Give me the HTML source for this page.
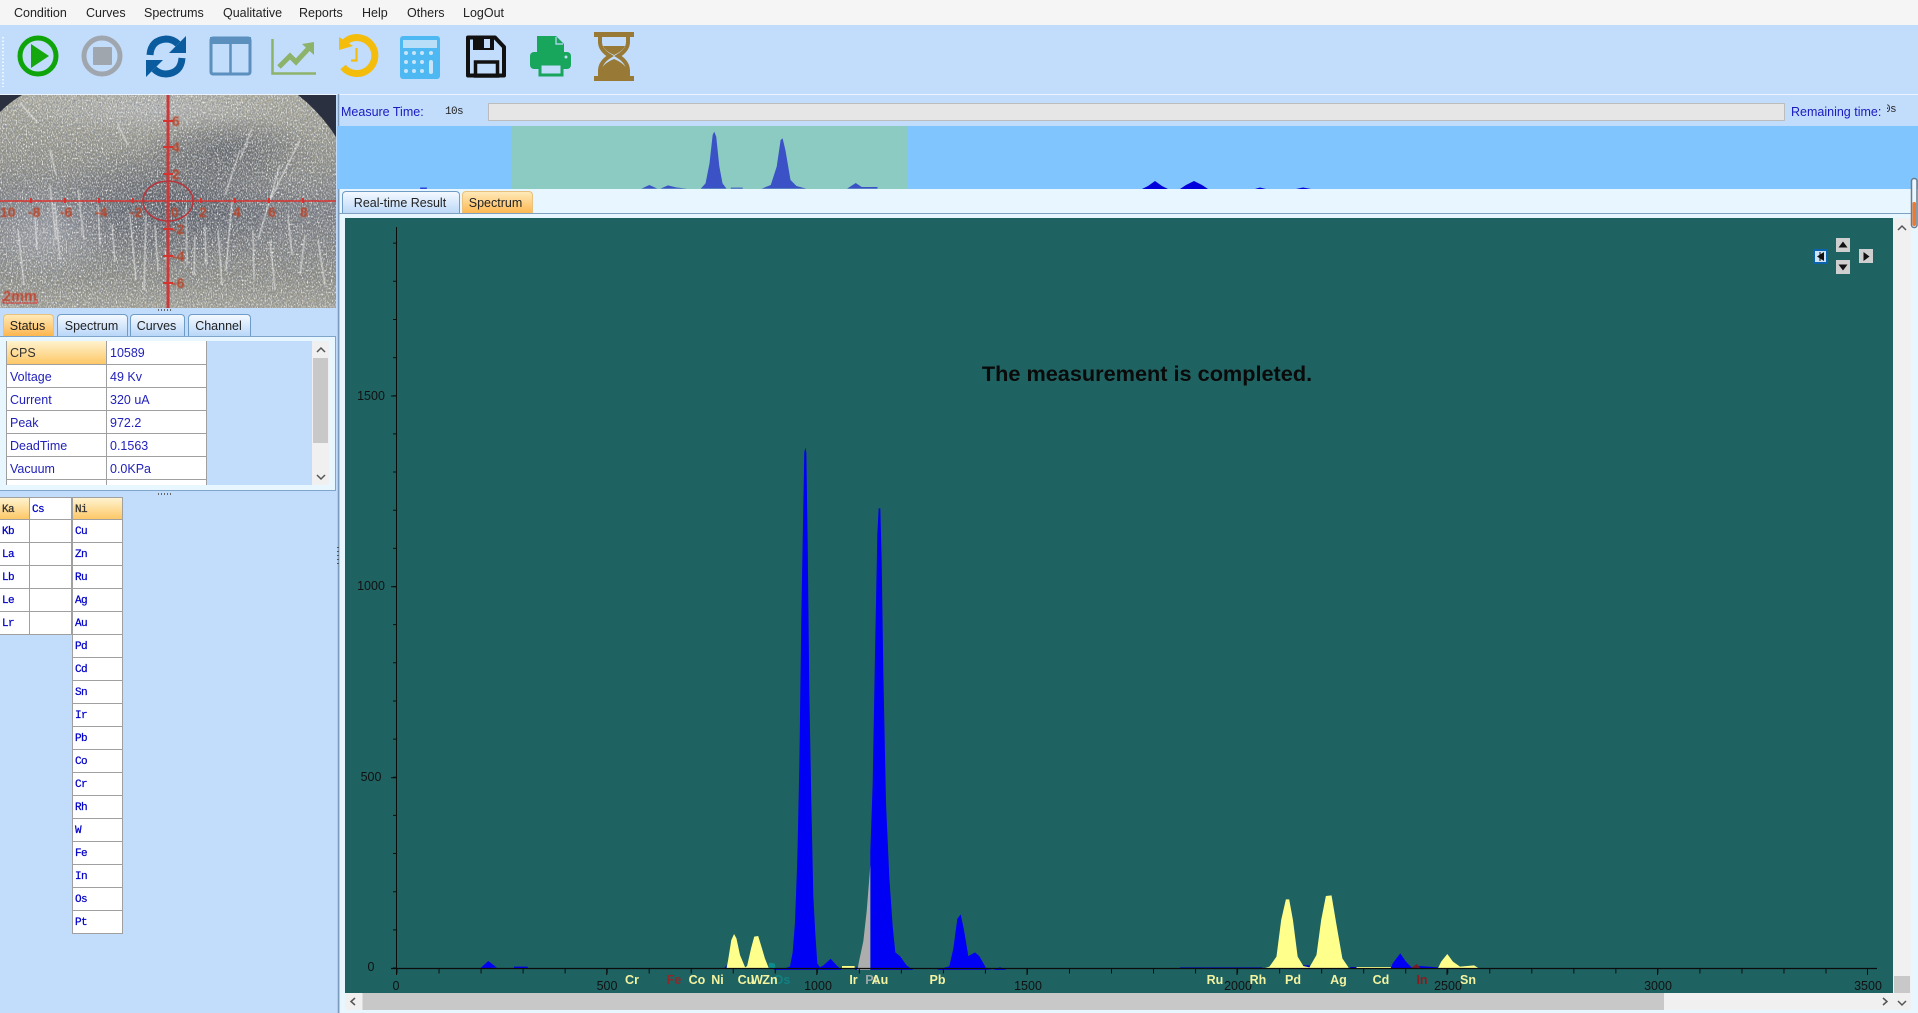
<!DOCTYPE html>
<html><head><meta charset="utf-8"><title>Spectrum</title>
<style>
html,body{margin:0;padding:0;width:1918px;height:1013px;overflow:hidden;background:#c2dcfc;font-family:"Liberation Sans",sans-serif}
.a{position:absolute}
#menu{left:0;top:0;width:1918px;height:25px;background:#f5f5f5}
#menu span{position:absolute;top:5px;font-size:12.5px;line-height:16px;color:#222}
.tab{position:absolute;box-sizing:border-box;border:1px solid #6f9cc6;border-bottom:0;border-radius:4px 4px 0 0;background:linear-gradient(#f4f9ff,#b9d7f8);font-size:12.5px;color:#222;text-align:center;padding-right:2px}
.tab.on{background:linear-gradient(#ffe9b8,#fdb64e);border-color:#e8c27c}
.c{position:absolute;box-sizing:border-box;background:#fff;border-right:1px solid #a0a0a0;border-bottom:1px solid #a0a0a0;color:#2222bb;font-size:12.5px;line-height:24px;padding-left:3px;height:23px;white-space:nowrap}
.c.h{background:linear-gradient(#fff3cf,#fdc868);color:#333}
.m{font-family:"Liberation Mono",monospace;font-size:11px;letter-spacing:-.6px;color:#0000c8;padding-left:2px;font-weight:normal;-webkit-text-stroke:.25px #0000c8}
.m.h{color:#333;-webkit-text-stroke:.25px #333}
.b{border-left:1px solid #a0a0a0}
</style></head><body>
<div id="menu" class="a">
<span style="left:14px">Condition</span><span style="left:86px">Curves</span><span style="left:144px">Spectrums</span><span style="left:223px">Qualitative</span><span style="left:299px">Reports</span><span style="left:362px">Help</span><span style="left:407px">Others</span><span style="left:463px">LogOut</span>
</div>

<div class="a" style="left:0;top:94px;width:1918px;height:1px;background:#eaf3ff"></div>
<div class="a" style="left:340px;top:189px;width:1578px;height:824px;background:#e8f6ff"></div>
<div class="a" style="left:0;top:336px;width:336px;height:155px;background:#e8f6ff;box-sizing:border-box;border-top:1px solid #7fa5ca;border-bottom:1px solid #7fa5ca;border-right:1px solid #7fa5ca"></div>
<div class="a" style="left:6px;top:341px;width:323px;height:144px;background:#c2dcfc;overflow:hidden">
  <div class="c h b" style="left:0;top:0;width:101px;height:24px;line-height:25px">CPS</div><div class="c" style="left:101px;top:0;width:100px;height:24px;line-height:25px">10589</div>
  <div class="c b" style="left:0;top:24px;width:101px">Voltage</div><div class="c" style="left:101px;top:24px;width:100px">49 Kv</div>
  <div class="c b" style="left:0;top:47px;width:101px">Current</div><div class="c" style="left:101px;top:47px;width:100px">320 uA</div>
  <div class="c b" style="left:0;top:70px;width:101px">Peak</div><div class="c" style="left:101px;top:70px;width:100px">972.2</div>
  <div class="c b" style="left:0;top:93px;width:101px">DeadTime</div><div class="c" style="left:101px;top:93px;width:100px">0.1563</div>
  <div class="c b" style="left:0;top:116px;width:101px">Vacuum</div><div class="c" style="left:101px;top:116px;width:100px">0.0KPa</div>
  <div class="c b" style="left:0;top:139px;width:101px"></div><div class="c" style="left:101px;top:139px;width:100px"></div>
  <div class="a" style="left:306px;top:0;width:17px;height:144px;background:#f0f0f0"></div>
  <div class="a" style="left:307px;top:17px;width:15px;height:85px;background:#c8c8c8"></div>
</div>

<div class="tab on" style="left:3px;top:314px;width:51px;height:22px;line-height:22px">Status</div>
<div class="tab" style="left:57px;top:314px;width:71px;height:22px;line-height:22px">Spectrum</div>
<div class="tab" style="left:130px;top:314px;width:55px;height:22px;line-height:22px">Curves</div>
<div class="tab" style="left:188px;top:314px;width:63px;height:22px;line-height:22px">Channel</div>

<div class="tab" style="left:342px;top:191px;width:118px;height:23px;line-height:23px">Real-time Result</div>
<div class="tab on" style="left:462px;top:191px;width:71px;height:23px;line-height:23px;padding-right:4px">Spectrum</div>
<div class="a" style="left:338px;top:213px;width:1573px;height:1px;background:#7fa0c0"></div>

<!-- small tables -->
<div class="c m h" style="left:0;top:497px;width:30px;border-top:1px solid #a0a0a0">Ka</div>
<div class="c m" style="left:30px;top:497px;width:42px;border-top:1px solid #a0a0a0">Cs</div>
<div class="c m" style="left:0;top:520px;width:30px">Kb</div><div class="c" style="left:30px;top:520px;width:42px"></div>
<div class="c m" style="left:0;top:543px;width:30px">La</div><div class="c" style="left:30px;top:543px;width:42px"></div>
<div class="c m" style="left:0;top:566px;width:30px">Lb</div><div class="c" style="left:30px;top:566px;width:42px"></div>
<div class="c m" style="left:0;top:589px;width:30px">Le</div><div class="c" style="left:30px;top:589px;width:42px"></div>
<div class="c m" style="left:0;top:612px;width:30px">Lr</div><div class="c" style="left:30px;top:612px;width:42px"></div>
<div class="a" style="left:72px;top:497px;width:51px;height:437px;border-left:1px solid #a0a0a0;box-sizing:border-box">
<div class="c m h" style="left:0;top:0;width:50px;border-top:1px solid #a0a0a0">Ni</div>
<div class="c m" style="left:0;top:23px;width:50px">Cu</div>
<div class="c m" style="left:0;top:46px;width:50px">Zn</div>
<div class="c m" style="left:0;top:69px;width:50px">Ru</div>
<div class="c m" style="left:0;top:92px;width:50px">Ag</div>
<div class="c m" style="left:0;top:115px;width:50px">Au</div>
<div class="c m" style="left:0;top:138px;width:50px">Pd</div>
<div class="c m" style="left:0;top:161px;width:50px">Cd</div>
<div class="c m" style="left:0;top:184px;width:50px">Sn</div>
<div class="c m" style="left:0;top:207px;width:50px">Ir</div>
<div class="c m" style="left:0;top:230px;width:50px">Pb</div>
<div class="c m" style="left:0;top:253px;width:50px">Co</div>
<div class="c m" style="left:0;top:276px;width:50px">Cr</div>
<div class="c m" style="left:0;top:299px;width:50px">Rh</div>
<div class="c m" style="left:0;top:322px;width:50px">W</div>
<div class="c m" style="left:0;top:345px;width:50px">Fe</div>
<div class="c m" style="left:0;top:368px;width:50px">In</div>
<div class="c m" style="left:0;top:391px;width:50px">Os</div>
<div class="c m" style="left:0;top:414px;width:50px">Pt</div>
</div>

<!-- progress row -->
<div class="a" style="left:341px;top:104px;font-size:12.5px;line-height:16px;color:#1a1ac0">Measure Time:</div>
<div class="a" style="left:445px;top:104px;font-family:'Liberation Mono',monospace;font-size:11px;letter-spacing:-.6px;line-height:16px;color:#222">10s</div>
<div class="a" style="left:488px;top:103px;width:1297px;height:18px;box-sizing:border-box;background:#e6e6e6;border:1px solid #bcbcbc"></div>
<div class="a" style="left:1791px;top:104px;font-size:12.5px;line-height:16px;color:#1a1ac0">Remaining time:</div>
<div class="a" style="left:1887px;top:103px;width:9px;height:14px;overflow:hidden"><div style="position:absolute;right:0;top:0;font-family:'Liberation Mono',monospace;font-size:11px;letter-spacing:-.6px;line-height:14px;color:#222">0s</div></div>

<svg class="a" style="left:0;top:0" width="1918" height="1013" viewBox="0 0 1918 1013" font-family="Liberation Sans, sans-serif">
<defs>
<linearGradient id="cb" x1="0" y1="0" x2="0" y2="1"><stop offset="0" stop-color="#aaa898"/><stop offset=".3" stop-color="#8e8d82"/><stop offset=".55" stop-color="#74767a"/><stop offset=".85" stop-color="#87877e"/><stop offset="1" stop-color="#a09e90"/></linearGradient>
<radialGradient id="dk" cx=".5" cy=".5" r=".5"><stop offset="0" stop-color="#3e434e" stop-opacity=".6"/><stop offset="1" stop-color="#3e434e" stop-opacity="0"/></radialGradient>
<radialGradient id="br" cx=".5" cy=".5" r=".5"><stop offset="0" stop-color="#c5c8d0" stop-opacity=".45"/><stop offset="1" stop-color="#c5c8d0" stop-opacity="0"/></radialGradient>
<filter id="nz" x="0" y="0" width="100%" height="100%"><feTurbulence type="fractalNoise" baseFrequency=".8 .5" numOctaves="2" seed="7"/><feColorMatrix type="matrix" values="0 0 0 0 .9  0 0 0 0 .9  0 0 0 0 .88  1.9 1.9 0 0 -1.8"/></filter>
<filter id="nd" x="0" y="0" width="100%" height="100%"><feTurbulence type="fractalNoise" baseFrequency=".7 .6" numOctaves="2" seed="21"/><feColorMatrix type="matrix" values="0 0 0 0 .22  0 0 0 0 .25  0 0 0 0 .33  0 1.8 1.8 0 -1.65"/></filter>
<filter id="bl"><feGaussianBlur stdDeviation=".4"/></filter>
<clipPath id="cam"><rect x="0" y="95" width="336" height="213"/></clipPath>
<clipPath id="mini"><rect x="337" y="126" width="1581" height="63"/></clipPath>
</defs>

<!-- camera -->
<g clip-path="url(#cam)">
<rect x="0" y="95" width="336" height="213" fill="url(#cb)"/>
<ellipse cx="175" cy="205" rx="130" ry="65" fill="url(#dk)"/>
<ellipse cx="230" cy="150" rx="90" ry="35" fill="url(#dk)"/>
<ellipse cx="45" cy="235" rx="70" ry="50" fill="url(#br)"/>
<ellipse cx="150" cy="110" rx="130" ry="25" fill="url(#br)"/>
<rect x="0" y="95" width="336" height="213" filter="url(#nd)"/>
<rect x="0" y="95" width="336" height="213" filter="url(#nz)"/>
<g stroke="#f2f2f0" stroke-width="1" opacity=".85" fill="none" filter="url(#bl)">
<path d="M20 103L37 122M18 230L24 285M50 185L56 240M55 205L60 260M78 190L84 240M130 215L136 280M146 215L144 290M155 225L158 270M186 205L187 265M205 225L206 265M218 230L222 285M232 200L226 270M253 230L254 280M280 165L258 240M300 140L270 200M270 240L275 290M305 235L300 275M118 125L128 145M50 150L56 175M35 215L37 250M98 205L100 245M112 225L115 262M165 250L170 285M195 235L194 275M288 215L292 255M318 240L325 285M240 150L225 195M252 128L240 160"/>
</g>
<path d="M0 95H22Q10 102 0 112Z" fill="#2b3040"/>
<path d="M298 95H336V137Q320 112 298 95Z" fill="#2b3040"/>
<g stroke="#d8322e" fill="none">
<path d="M168 95V308" stroke-width="3" stroke="#c93a3a"/>
<path d="M0 201H336" stroke-width="1.500"/>
<ellipse cx="168" cy="201" rx="25" ry="20" stroke-width="1.500" stroke="#b8343a"/>
<path d="M31 198v5M65 198v5M99 198v5M133 198v5M201 198v5M235 198v5M269 198v5M303 198v5" stroke-width="2"/>
<path d="M163 121h10M163 147h10M163 174h10M163 229h10M163 256h10M163 283h10" stroke-width="2"/>
</g>
<g fill="#b8442a" font-size="14" font-weight="bold" filter="url(#bl)">
<text x="0" y="217">10</text><text x="28" y="217">-8</text><text x="60" y="217">-6</text><text x="95" y="217">-4</text><text x="130" y="217">-2</text><text x="171" y="217">0</text><text x="199" y="217">2</text><text x="233" y="217">4</text><text x="268" y="217">6</text><text x="300" y="217">8</text>
<text x="172" y="126">6</text><text x="172" y="152">4</text><text x="172" y="179">2</text><text x="172" y="234">-2</text><text x="172" y="261">-4</text><text x="172" y="288">-6</text>
</g>
<text x="3" y="301" font-size="15" fill="#c0432e" font-weight="bold" textLength="34" lengthAdjust="spacingAndGlyphs" filter="url(#bl)">2mm</text>
<path d="M3 303H37M3 299V303M37 299V303" stroke="#d8322e" fill="none"/>
</g>
<path d="M158 310h1M161 310h1M164 310h1M167 310h1M170 310h1" stroke="#666" stroke-width="2"/>
<path d="M158 494h1M161 494h1M164 494h1M167 494h1M170 494h1" stroke="#666" stroke-width="2"/>
<path d="M338.500 94V1013" stroke="#7c9abb" stroke-width="1.500"/>
<path d="M338 547v1M338 551v1M338 555v1M338 559v1M338 563v1" stroke="#555" stroke-width="2"/>
<path d="M317 352l4-4 4 4M317 475l4 4 4-4" fill="none" stroke="#555" stroke-width="1.500"/>

<!-- toolbar handle -->
<path d="M3 37V87" stroke="#fff" stroke-width="1.500" stroke-dasharray="1.500 2"/>
<!-- play -->
<circle cx="38" cy="56" r="18" fill="none" stroke="#0fa40a" stroke-width="5"/>
<path d="M31 44L49 56L31 68Z" fill="#14a80e"/>
<!-- stop -->
<circle cx="102" cy="56" r="18" fill="none" stroke="#a0a6ae" stroke-width="5"/>
<rect x="93" y="47" width="19" height="18" rx="1" fill="#a0a6ae"/>
<!-- refresh -->
<g fill="none" stroke="#0b5c9e" stroke-width="7">
<path d="M150 55Q151 40 166 39Q173 39 178 44"/>
<path d="M182 58Q181 73 166 74Q159 74 154 69"/>
</g>
<path d="M186 36V53H169Z" fill="#0b5c9e"/><path d="M146 77V60H163Z" fill="#0b5c9e"/>
<!-- columns -->
<rect x="211" y="38" width="39" height="36" rx="2" fill="none" stroke="#5a8fbe" stroke-width="3"/>
<rect x="210" y="37" width="41" height="7" fill="#5a8fbe"/>
<path d="M230.500 44V74" stroke="#5a8fbe" stroke-width="2.500"/>
<!-- chart -->
<path d="M272.500 39V73.500H316" fill="none" stroke="#8db26a" stroke-width="2.500"/>
<path d="M279 67L290 56L296 62L308 49" fill="none" stroke="#8db26a" stroke-width="5"/>
<path d="M302 44L314 42V55Z" fill="#8db26a"/>
<!-- clock -->
<path d="M345 42A18 18 0 1 1 343 67" fill="none" stroke="#f4bd0c" stroke-width="7"/>
<path d="M339 50V37L353 46Z" fill="#f4bd0c"/>
<path d="M356.500 48V60.500H351" fill="none" stroke="#f4bd0c" stroke-width="2.200"/>
<!-- calc -->
<rect x="400" y="36" width="40" height="43" rx="3" fill="#4db8f2"/>
<rect x="403" y="40" width="34" height="8" fill="#b8def8"/>
<g fill="#c8e4fa"><circle cx="406" cy="53" r="2"/><circle cx="414" cy="53" r="2"/><circle cx="422" cy="53" r="2"/><circle cx="431" cy="53" r="2"/><circle cx="406" cy="62" r="2"/><circle cx="414" cy="62" r="2"/><circle cx="422" cy="62" r="2"/><circle cx="406" cy="71" r="2"/><circle cx="414" cy="71" r="2"/><circle cx="422" cy="71" r="2"/><rect x="429" y="60" width="4" height="14" rx="2"/></g>
<!-- save -->
<path d="M468 37.500H495L504 47V75.500H468Z" fill="none" stroke="#111" stroke-width="4" stroke-linejoin="round"/>
<path d="M473 37H494V50H473Z" fill="#111"/><rect x="484" y="39" width="6" height="9" fill="#c2dcfc"/>
<rect x="475.500" y="62" width="22" height="14" fill="none" stroke="#111" stroke-width="3.500"/>
<!-- print -->
<path d="M537 36H556L564 44V54H537Z" fill="#17a65c"/><path d="M556 37V44H563" fill="none" stroke="#c2dcfc" stroke-width="1.200"/>
<rect x="530" y="52" width="41" height="17" rx="4" fill="#17a65c"/>
<rect x="540" y="64" width="22" height="11" fill="#c2dcfc" stroke="#17a65c" stroke-width="3"/>
<circle cx="566" cy="57" r="1.500" fill="#c2dcfc"/>
<!-- hourglass -->
<rect x="594" y="32" width="40" height="5" fill="#987a36"/><rect x="594" y="76" width="40" height="5" fill="#987a36"/>
<path d="M600 37V42Q600 50 610 56Q600 62 600 71V76H628V71Q628 62 618 56Q628 50 628 42V37" fill="#c2dcfc" stroke="#987a36" stroke-width="4"/>
<path d="M603 46H625Q623 51 614 55Q605 51 603 46ZM601 76V71Q602 64 614 59Q626 64 627 71V76Z" fill="#987a36"/>

<!-- mini spectrum -->
<rect x="337" y="126" width="1581" height="63" fill="#80c5fe"/>
<rect x="512" y="126" width="395" height="63" fill="#8ccbc2"/>
<g clip-path="url(#mini)">
<g transform="translate(330,90) scale(.3953,.3333)" fill="#3a52c6">
<path d="M938 296L950 280L960 220L968 135L972 125L977 140L985 230L993 280L1003 296Z"/>
<path d="M1092 296L1115 285L1130 230L1140 150L1145 145L1152 180L1165 270L1180 288L1205 296Z"/>
<path d="M788 296L808 285L828 296ZM836 296L855 286L875 292L903 296ZM1014 293H1044V296H1014ZM1308 296L1330 279L1345 291H1385V296Z"/>
<path d="M228 293H245V296H228Z" fill="#0000cc"/>
</g>
<path d="M1142 189L1148 186L1155 181L1162 186L1168 189ZM1180 189L1186 185L1194 181L1202 185L1208 189ZM1255 189L1260 187.500L1266 189ZM1296 189L1303 187.500L1311 189Z" fill="#0000dd"/>
</g>

<!-- chart -->
<rect x="345" y="218" width="1548" height="775" fill="#1f6262"/>
<!-- peaks -->
<g transform="translate(740,430) scale(.33333,.37313)" fill="#0000f5">
<path d="M100 1447L108 1443L135 1443L150 1438L158 1400L165 1320L172 1150L178 900L184 500L190 200L193 60L196 47L199 60L203 300L208 700L214 1000L220 1250L226 1350L232 1430L240 1440L250 1435L272 1417L290 1435L305 1447Z"/>
<path d="M391 1447V1130L398 950L405 600L412 280L416 210L421 210L425 350L430 650L438 1000L448 1200L458 1330L466 1400L480 1410L500 1435L520 1447Z"/>
<path d="M345 1447L352 1437V1447Z"/>
<path d="M352 1447L358 1420L370 1370L380 1290L388 1200L391 1165V1447Z" fill="#adadad"/>
<path d="M590 1447L628 1437L640 1390L652 1310L662 1298L672 1340L685 1410L705 1400L718 1410L740 1445L760 1447L780 1440L800 1447Z"/>
</g>
<g transform="translate(340,880) scale(.39526,.33333)">
<path d="M355 265L375 243L397 263ZM440 265V260H475V265ZM972 265L978 255V265Z" fill="#0000f5"/>
<path d="M978 265L982 240L990 180L997 162L1003 175L1012 225L1025 262L1030 258L1040 205L1048 170L1058 168L1065 195L1075 235L1085 265Z" fill="#ffff8c"/>
<path d="M1085 248L1100 250L1102 265H1085Z" fill="#0d8c8c"/>
<path d="M1270 265V258H1302V265Z" fill="#ffff8c"/>
</g>
<g transform="translate(1180,880) scale(.47059,.33333)">
<path d="M0 265V262H175V265ZM260 265V256H276V265ZM362 265V261H375V265Z" fill="#0000c8"/>
<path d="M178 265L190 260L205 230L215 120L225 58L232 58L240 120L250 230L262 258L275 262L290 225L300 120L310 48L322 46L332 130L345 235L358 262V265Z" fill="#ffff8c"/>
<path d="M375 265V261H448V265Z" fill="#ffff8c"/>
<path d="M448 265L452 250L468 220L480 245L492 262L510 258L548 262V265Z" fill="#0000f5"/>
<path d="M490 265L503 252L512 265Z" fill="#7a1c2c"/>
<path d="M548 265L555 245L568 222L580 245L595 260L625 256L635 265Z" fill="#ffff8c"/>
</g>
<!-- axes -->
<g stroke="#0c0c0c" fill="none">
<path d="M396.500 227V972" stroke-width="1"/>
<path d="M391 968.500H1877" stroke-width="1.200"/>
<path d="M396.500 971H1868" stroke-width="5" stroke-dasharray="1 41.030"/>
<path d="M394.500 968.500V228" stroke-width="3" stroke-dasharray="1 37.150"/>
<path d="M396.500 968V975M606.700 968V975M816.800 968V975M1027 968V975M1237 968V975M1447 968V975M1657.500 968V975M1867.500 968V975"/>
<path d="M391 968.500H396M391 777.700H396M391 586.800H396M391 396H396"/>
</g>
<g fill="#111" font-size="12.500" text-anchor="middle">
<text x="371" y="971">0</text><text x="371" y="781">500</text><text x="371" y="590">1000</text><text x="371" y="400">1500</text>
<text x="396" y="990">0</text><text x="607" y="990">500</text><text x="818" y="990">1000</text><text x="1028" y="990">1500</text><text x="1238" y="990">2000</text><text x="1448" y="990">2500</text><text x="1658" y="990">3000</text><text x="1868" y="990">3500</text>
</g>
<g fill="#f3f3a0" font-size="12.500" font-weight="bold" text-anchor="middle">
<text x="632" y="984">Cr</text><text x="674" y="984" fill="#8b2a2a">Fe</text><text x="697" y="984">Co</text><text x="717.500" y="984">Ni</text><text x="746" y="984">Cu</text><text x="782" y="984" fill="#108080">Os</text><text x="757" y="984">W</text><text x="770" y="984">Zn</text><text x="853.500" y="984">Ir</text><text x="871.500" y="984" fill="#9aa8a8">Pt</text><text x="880" y="984">Au</text><text x="937.500" y="984">Pb</text>
<text x="1215" y="984">Ru</text><text x="1258" y="984">Rh</text><text x="1293" y="984">Pd</text><text x="1338.500" y="984">Ag</text><text x="1381" y="984">Cd</text><text x="1422" y="984" fill="#8b1a1a">In</text><text x="1468" y="984">Sn</text>
</g>
<text x="1147" y="381" text-anchor="middle" font-size="21.700" font-weight="bold" fill="#0a0a0a">The measurement is completed.</text>

<!-- nav buttons -->
<rect x="1814" y="250" width="13" height="13" fill="#cfe3f4" stroke="#0b62ad" stroke-width="2"/><path d="M1824 252V261L1817 256.500Z" fill="#111"/><path d="M1820 252V261" stroke="#111"/>
<rect x="1836" y="238" width="14" height="14" fill="#cfcfcf"/><path d="M1838.500 247.500H1847.500L1843 241.500Z" fill="#111"/>
<rect x="1836" y="260" width="14" height="14" fill="#cfcfcf"/><path d="M1838.500 264.500H1847.500L1843 270.500Z" fill="#111"/>
<rect x="1859" y="249" width="14" height="14" fill="#cfcfcf"/><path d="M1863.500 252V261L1869.500 256.500Z" fill="#111"/>

<!-- scrollbars -->
<rect x="1893" y="218" width="18" height="792" fill="#f0f0f0"/>
<rect x="1894" y="976" width="16" height="17" fill="#c8c8c8"/>
<path d="M1898 230l4-4 4 4M1898 1001l4 4 4-4" fill="none" stroke="#555" stroke-width="1.500"/>
<rect x="345" y="993" width="1548" height="17" fill="#f0f0f0"/>
<rect x="362.500" y="993" width="1301.500" height="17" fill="#c8c8c8"/>
<path d="M355 998l-4 3.500 4 3.500M1883 998l4 3.500 -4 3.500" fill="none" stroke="#555" stroke-width="1.500"/>
<rect x="1911.500" y="178.500" width="5.500" height="49" rx="2.500" fill="#e8f6ff" stroke="#6b7b8c" stroke-width="1.500"/>
<rect x="1912.500" y="202" width="3.500" height="24" rx="1.500" fill="#ee7a30"/>
</svg>
</body></html>
